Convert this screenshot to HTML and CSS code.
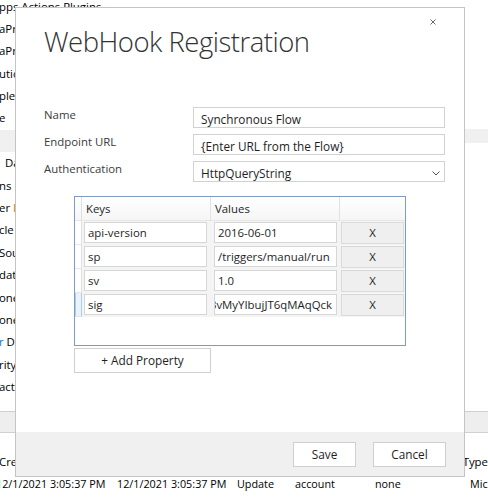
FILE: index.html
```html
<!DOCTYPE html>
<html>
<head>
<meta charset="utf-8">
<link rel="stylesheet" href="styles.css">
</head>
<body>
<div class="app">
  <div class="upper">
    <div class="tree">
      <div class="ti ti-top">pps Actions Plugins</div>
      <div class="ti">aProviders</div>
      <div class="ti">aProviders</div>
      <div class="ti">utions</div>
      <div class="ti">ples</div>
      <div class="ti">e</div>
      <div class="ti sel"></div>
      <div class="ti ind">Data</div>
      <div class="ti">ns Data</div>
      <div class="ti">er <span class="or">I</span></div>
      <div class="ti">cle</div>
      <div class="ti">Sou</div>
      <div class="ti">dat<span class="or">a</span></div>
      <div class="ti">one</div>
      <div class="ti">one</div>
      <div class="ti"><span class="bl">r</span> Data</div>
      <div class="ti">rity</div>
      <div class="ti">act</div>
    </div>
    <div class="side"><div class="side-sel"></div></div>
  </div>
  <div class="band"></div>
  <div class="hdr">
    <div class="hc hc1">Created On</div>
    <div class="hc hc6">Type</div>
  </div>
  <div class="drow">
    <div class="dc c1">12/1/2021 3:05:37 PM</div>
    <div class="dc c2">12/1/2021 3:05:37 PM</div>
    <div class="dc c3">Update</div>
    <div class="dc c4">account</div>
    <div class="dc c5">none</div>
    <div class="dc c6">Microsoft</div>
  </div>
</div>

<div class="dialog">
  <div class="dlg-head">
    <div class="title">WebHook Registration</div>
    <div class="close">
      <svg width="12" height="12" viewBox="0 0 12 12"><path d="M3.5 3.5 L8.5 8.5 M8.5 3.5 L3.5 8.5" stroke="#6b6b6b" stroke-width="1" fill="none"/></svg>
    </div>
  </div>
  <div class="form">
    <div class="lbl">Name</div>
    <div class="inp">Synchronous Flow</div>
    <div class="lbl">Endpoint URL</div>
    <div class="inp">{Enter URL from the Flow}</div>
    <div class="lbl">Authentication</div>
    <div class="inp sel-inp"><span>HttpQueryString</span>
      <svg width="8" height="5" viewBox="0 0 8 5"><path d="M0.5 0.5 L4 4 L7.5 0.5" stroke="#555" stroke-width="1" fill="none"/></svg>
    </div>
  </div>
  <div class="grid">
    <div class="grow ghead">
      <div class="rh"></div>
      <div class="gh">Keys</div>
      <div class="gh">Values</div>
      <div class="gh"></div>
    </div>
    <div class="grow">
      <div class="rh"></div>
      <div class="kc"><div class="tb">api-version</div></div>
      <div class="vc"><div class="tb">2016-06-01</div></div>
      <div class="xc"><div class="xb">X</div></div>
    </div>
    <div class="grow">
      <div class="rh"></div>
      <div class="kc"><div class="tb">sp</div></div>
      <div class="vc"><div class="tb">/triggers/manual/run</div></div>
      <div class="xc"><div class="xb">X</div></div>
    </div>
    <div class="grow">
      <div class="rh"></div>
      <div class="kc"><div class="tb">sv</div></div>
      <div class="vc"><div class="tb">1.0</div></div>
      <div class="xc"><div class="xb">X</div></div>
    </div>
    <div class="grow">
      <div class="rh rh-cur"></div>
      <div class="kc"><div class="tb">sig</div></div>
      <div class="vc"><div class="tb tb-end"><span>LfQ3vMyYIbujJT6qMAqQck</span></div></div>
      <div class="xc"><div class="xb">X</div></div>
    </div>
  </div>
  <div class="add">+ Add Property</div>
  <div class="footer">
    <div class="btn btn-save">Save</div>
    <div class="btn btn-cancel">Cancel</div>
  </div>
</div>
</body>
</html>
```

FILE: styles.css
```css
html, body {
  margin: 0;
  padding: 0;
  background: #ffffff;
}
body {
  font-family: "Open Sans", "Noto Sans", sans-serif;
  font-size: 11.4px;
  color: #000;
  position: relative;
  width: 488px;
  height: 499px;
  overflow: hidden;
}
.app {
  width: 488px;
  height: 499px;
  overflow: hidden;
}
.upper {
  display: flex;
  height: 411px;
  overflow: hidden;
}
.tree {
  width: 200px;
  margin-top: -4.5px;
  flex: none;
}
.ti {
  height: 22.4px;
  line-height: 22.4px;
  white-space: nowrap;
  margin-left: -1px;
}
.ti.sel {
  background: #f0f0f0;
  margin-left: 0;
}
.ti.ind { padding-left: 6px; }
.or { color: #d9730d; }
.bl { color: #1a6fc9; }
.side {
  margin-left: auto;
  width: 23px;
  flex: none;
}
.side-sel {
  margin-top: 129px;
  height: 14px;
  background: #f0f0f0;
}
.band {
  height: 22px;
  box-sizing: border-box;
  background: #eeeeee;
  border-top: 1px solid #d0d0d0;
  border-bottom: 1px solid #d0d0d0;
}
.hdr {
  display: flex;
  height: 17px;
  margin-top: 17px;
}
.hc {
  height: 17px;
  box-sizing: border-box;
  padding-top: 4px;
  line-height: 16px;
  white-space: nowrap;
  overflow: visible;
}
.hc1 { margin-left: -1px; width: 468px; }
.hc6 { border-left: 1px solid #e3e3e3; padding-left: 5px; }
.drow {
  display: flex;
  margin-top: 6px;
  height: 22px;
  line-height: 22px;
  font-size: 10.8px;
  white-space: nowrap;
}
.dc { flex: none; overflow: hidden; }
.c1 { margin-left: -4px; width: 121px; }
.c2 { width: 120px; }
.c3 { width: 58px; }
.c4 { width: 80px; }
.c5 { width: 95px; }
.c6 { width: 30px; }

/* dialog */
.dialog {
  position: absolute;
  left: 15px;
  top: 7px;
  width: 450px;
  height: 470px;
  box-sizing: border-box;
  border: 1px solid #c4c4c4;
  background: #ffffff;
  display: flex;
  flex-direction: column;
}
.dlg-head {
  display: flex;
  justify-content: space-between;
  align-items: flex-start;
}
.title {
  margin: 16px 0 0 28px;
  font-family: "Open Sans", sans-serif;
  font-weight: 300;
  font-size: 27.5px;
  letter-spacing: -0.5px;
  line-height: 36px;
  color: #333333;
  white-space: nowrap;
}
.close {
  margin: 8px 25px 0 0;
  width: 12px;
  height: 12px;
}
.close svg { display: block; }
.form {
  display: grid;
  grid-template-columns: 149px 252px;
  row-gap: 6px;
  margin: 47px 0 0 28px;
}
.lbl {
  line-height: 16px;
  color: #3b3b3b;
  white-space: nowrap;
}
.inp {
  height: 21px;
  box-sizing: border-box;
  border: 1px solid #d2d2d2;
  padding: 3px 7px 0 7px;
  line-height: 16px;
  color: #1e1e1e;
  white-space: nowrap;
  overflow: hidden;
  font-size: 11.8px;
}
.sel-inp {
  display: flex;
  justify-content: space-between;
  align-items: flex-start;
  padding-right: 4px;
}
.sel-inp svg { margin-top: 6px; display: block; }

.grid {
  margin: 14px 0 0 58px;
  width: 332px;
  height: 150px;
  box-sizing: border-box;
  border: 1px solid #7d9cc0;
  background: #ffffff;
}
.grow {
  display: grid;
  grid-template-columns: 7px 129px 129px 65px;
  height: 24px;
  background: #f4f4f4;
}
.ghead {
  background: linear-gradient(#ffffff, #f5f5f5);
}
.gh {
  box-sizing: border-box;
  border-right: 1px solid #e2e2e2;
  border-bottom: 1px solid #e6e6e6;
  padding-left: 4px;
  line-height: 23px;
  color: #1e1e1e;
}
.gh:last-child { border-right: none; }
.rh {
  box-sizing: border-box;
  border-right: 1px solid #e0e0e0;
  border-bottom: 1px solid #e6e6e6;
  background: #ffffff;
}
.ghead .rh { background: transparent; }
.rh-cur {
  background: #e8f3fc;
  border-left: 1px solid #a9cdf0;
  border-right: 1px solid #a9cdf0;
}
.kc { padding: 1px 4px 2px 2px; }
.vc { padding: 1px 3px 2px 3px; }
.xc { padding: 1px 1px 1px 1px; }
.tb {
  height: 21px;
  box-sizing: border-box;
  border: 1px solid #d6d6d6;
  background: #ffffff;
  padding-left: 3px;
  line-height: 19px;
  color: #1e1e1e;
  white-space: nowrap;
  overflow: hidden;
}
.tb-end {
  display: flex;
  justify-content: flex-end;
  padding-left: 0;
  padding-right: 4px;
}
.tb-end span { flex: none; }
.xb {
  height: 22px;
  box-sizing: border-box;
  border: 1px solid #dadada;
  background: #efefef;
  text-align: center;
  line-height: 20px;
  color: #1e1e1e;
}
.add {
  margin: 2px 0 0 58px;
  width: 137px;
  height: 25px;
  box-sizing: border-box;
  border: 1px solid #d0d0d0;
  background: #ffffff;
  text-align: center;
  line-height: 23px;
  color: #1e1e1e;
  font-size: 11.8px;
}
.footer {
  margin-top: auto;
  height: 44px;
  background: #f0f0f0;
  display: flex;
  justify-content: flex-end;
  align-items: flex-start;
  padding: 10px 18px 0 0;
  box-sizing: border-box;
  column-gap: 17px;
}
.btn {
  height: 25px;
  box-sizing: border-box;
  border: 1px solid #cfcfcf;
  background: #ffffff;
  text-align: center;
  line-height: 23px;
  color: #1e1e1e;
  font-size: 11.8px;
}
.btn-save { width: 63px; }
.btn-cancel { width: 73px; }
```
